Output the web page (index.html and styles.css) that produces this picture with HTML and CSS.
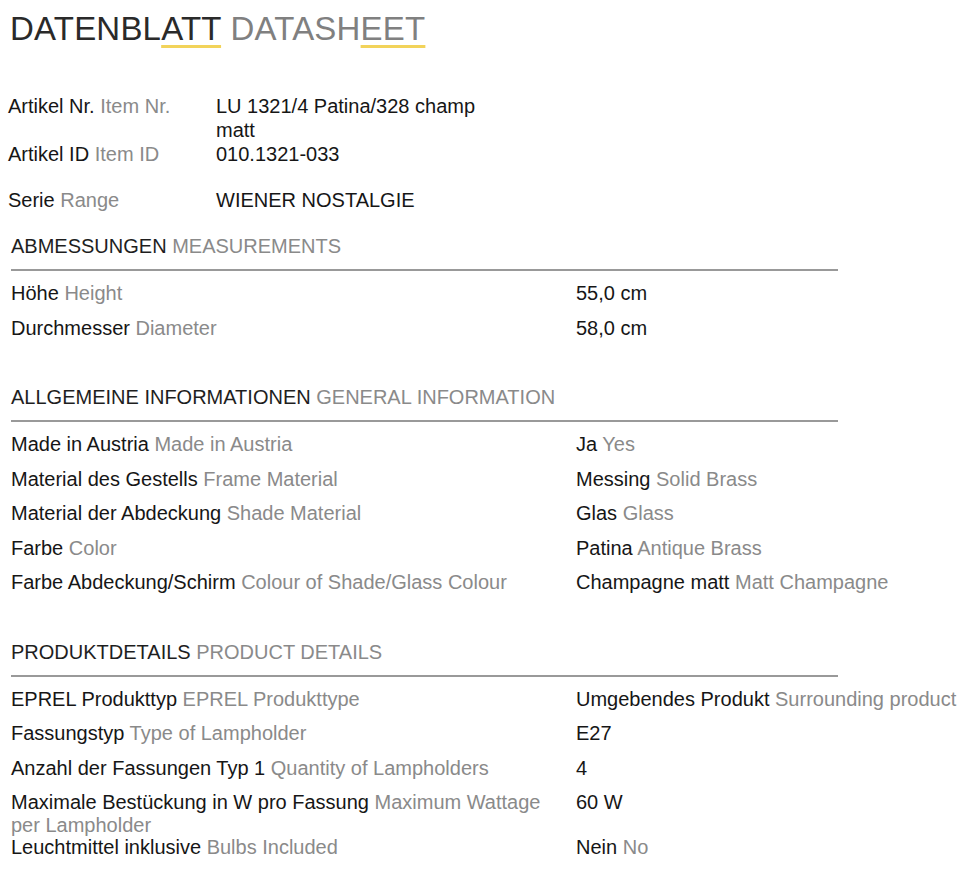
FILE: index.html
```html
<!DOCTYPE html>
<html lang="de">
<head>
    <meta charset="UTF-8">
    <meta name="viewport" content="width=device-width, initial-scale=1.0">
    <title>Datenblatt</title>
    <link rel="stylesheet" href="styles.css">
</head>
<body>
    <header>
        <h1>DATENBL<span class="mark">ATT</span> <span class="en">DATASH<span class="mark">EET</span></span></h1>
    </header>

    <section class="info">
        <div class="row">
            <div>Artikel Nr. <span class="en">Item Nr.</span></div>
            <div class="value">LU 1321/4 Patina/328 champ matt</div>
        </div>
        <div class="row">
            <div>Artikel ID <span class="en">Item ID</span></div>
            <div class="value">010.1321-033</div>
        </div>
        <div class="row range">
            <div>Serie <span class="en">Range</span></div>
            <div class="value">WIENER NOSTALGIE</div>
        </div>
    </section>

    <section class="block">
        <h2>ABMESSUNGEN <span class="en">MEASUREMENTS</span></h2>
        <div class="row">
            <div>Höhe <span class="en">Height</span></div>
            <div>55,0 cm</div>
        </div>
        <div class="row">
            <div>Durchmesser <span class="en">Diameter</span></div>
            <div>58,0 cm</div>
        </div>
    </section>

    <section class="block">
        <h2>ALLGEMEINE INFORMATIONEN <span class="en">GENERAL INFORMATION</span></h2>
        <div class="row">
            <div>Made in Austria <span class="en">Made in Austria</span></div>
            <div>Ja <span class="en">Yes</span></div>
        </div>
        <div class="row">
            <div>Material des Gestells <span class="en">Frame Material</span></div>
            <div>Messing <span class="en">Solid Brass</span></div>
        </div>
        <div class="row">
            <div>Material der Abdeckung <span class="en">Shade Material</span></div>
            <div>Glas <span class="en">Glass</span></div>
        </div>
        <div class="row">
            <div>Farbe <span class="en">Color</span></div>
            <div>Patina <span class="en">Antique Brass</span></div>
        </div>
        <div class="row">
            <div>Farbe Abdeckung/Schirm <span class="en">Colour of Shade/Glass Colour</span></div>
            <div>Champagne matt <span class="en">Matt Champagne</span></div>
        </div>
    </section>

    <section class="block">
        <h2>PRODUKTDETAILS <span class="en">PRODUCT DETAILS</span></h2>
        <div class="row">
            <div>EPREL Produkttyp <span class="en">EPREL Produkttype</span></div>
            <div>Umgebendes Produkt <span class="en">Surrounding product</span></div>
        </div>
        <div class="row">
            <div>Fassungstyp <span class="en">Type of Lampholder</span></div>
            <div>E27</div>
        </div>
        <div class="row">
            <div>Anzahl der Fassungen Typ 1 <span class="en">Quantity of Lampholders</span></div>
            <div>4</div>
        </div>
        <div class="row">
            <div>Maximale Bestückung in W pro Fassung <span class="en">Maximum Wattage per Lampholder</span></div>
            <div>60 W</div>
        </div>
        <div class="row">
            <div>Leuchtmittel inklusive <span class="en">Bulbs Included</span></div>
            <div>Nein <span class="en">No</span></div>
        </div>
    </section>
</body>
</html>
```

FILE: styles.css
```css
body{
    font-family: "Liberation Sans", Arial, sans-serif;
    color: #161616;
    background-color: #fff;
    margin: 0;
    padding: 0 0 0 8px;
}

.en{
    color: #8a8a8a;
}

header{
    margin-top: 9px;
    padding-left: 2px;

    h1{
        margin: 0;
        font-size: 33px;
        line-height: 40px;
        font-weight: 400;
        color: #2a2a2a;
        letter-spacing: 0.2px;
    }
    .en{
        color: #808080;
    }
    .mark{
        text-decoration: underline;
        text-decoration-color: #f2d35a;
        text-decoration-thickness: 3px;
        text-underline-offset: 5px;
    }
}

.info{
    margin-top: 45px;
    font-size: 20px;
    line-height: 24px;

    .row{
        display: grid;
        grid-template-columns: 208px 280px;
    }
    .range{
        margin-top: 22px;
    }
}

.block{
    margin: 22px 0 0 3px;
    font-size: 20px;
    line-height: 22.5px;

    & + .block{
        margin-top: 34px;
    }

    h2{
        width: 827px;
        margin: 0 0 11px;
        padding-bottom: 11px;
        border-bottom: 2px solid #999;
        font-size: 20px;
        line-height: 24px;
        font-weight: 400;
        color: #1e1e1e;
    }

    .row{
        display: grid;
        grid-template-columns: 565px auto;
        min-height: 34.5px;

        > div:first-child{
            padding-right: 20px;
        }
    }
}
```
